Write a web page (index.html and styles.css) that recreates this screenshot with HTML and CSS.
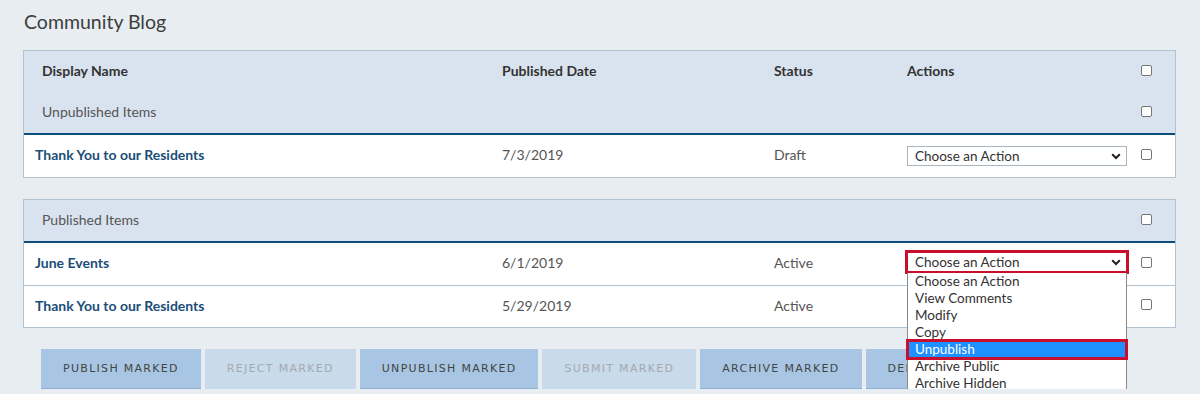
FILE: index.html
```html
<!DOCTYPE html>
<html lang="en">
<head>
<meta charset="utf-8">
<title>Community Blog</title>
<link rel="stylesheet" href="styles.css">
</head>
<body>
<div class="page">
  <h1 class="title">Community Blog</h1>

  <section class="panel">
    <div class="row head-row">
      <div class="cell c-name">Display Name</div>
      <div class="cell">Published Date</div>
      <div class="cell">Status</div>
      <div class="cell">Actions</div>
      <div class="cell c-check"><input type="checkbox" class="cb"></div>
    </div>
    <div class="row group-row">
      <div class="cell c-name group-label">Unpublished Items</div>
      <div class="cell"></div>
      <div class="cell"></div>
      <div class="cell"></div>
      <div class="cell c-check"><input type="checkbox" class="cb"></div>
    </div>
    <div class="row data-row">
      <div class="cell c-name"><a class="item-link" href="#">Thank You to our Residents</a></div>
      <div class="cell">7/3/2019</div>
      <div class="cell">Draft</div>
      <div class="cell">
        <span class="select-wrap">
          <select class="action-select"><option>Choose an Action</option></select>
          <svg class="chev" width="10" height="7" viewBox="0 0 10 7"><path d="M1.2 1.2 L5 5 L8.8 1.2" fill="none" stroke="#222" stroke-width="2"/></svg>
        </span>
      </div>
      <div class="cell c-check"><input type="checkbox" class="cb"></div>
    </div>
  </section>

  <section class="panel">
    <div class="row group-row">
      <div class="cell c-name group-label">Published Items</div>
      <div class="cell"></div>
      <div class="cell"></div>
      <div class="cell"></div>
      <div class="cell c-check"><input type="checkbox" class="cb"></div>
    </div>
    <div class="row data-row">
      <div class="cell c-name"><a class="item-link" href="#">June Events</a></div>
      <div class="cell">6/1/2019</div>
      <div class="cell">Active</div>
      <div class="cell">
        <span class="select-wrap open">
          <select class="action-select highlighted"><option>Choose an Action</option></select>
          <svg class="chev" width="10" height="7" viewBox="0 0 10 7"><path d="M1.2 1.2 L5 5 L8.8 1.2" fill="none" stroke="#222" stroke-width="2"/></svg>
          <ul class="dropdown">
            <li>Choose an Action</li>
            <li>View Comments</li>
            <li>Modify</li>
            <li>Copy</li>
            <li class="selected">Unpublish</li>
            <li>Archive Public</li>
            <li>Archive Hidden</li>
          </ul>
        </span>
      </div>
      <div class="cell c-check"><input type="checkbox" class="cb"></div>
    </div>
    <div class="row data-row">
      <div class="cell c-name"><a class="item-link" href="#">Thank You to our Residents</a></div>
      <div class="cell">5/29/2019</div>
      <div class="cell">Active</div>
      <div class="cell">
        <span class="select-wrap">
          <select class="action-select"><option>Choose an Action</option></select>
          <svg class="chev" width="10" height="7" viewBox="0 0 10 7"><path d="M1.2 1.2 L5 5 L8.8 1.2" fill="none" stroke="#222" stroke-width="2"/></svg>
        </span>
      </div>
      <div class="cell c-check"><input type="checkbox" class="cb"></div>
    </div>
  </section>

  <div class="buttons">
    <button class="btn">Publish Marked</button>
    <button class="btn" disabled>Reject Marked</button>
    <button class="btn">Unpublish Marked</button>
    <button class="btn" disabled>Submit Marked</button>
    <button class="btn">Archive Marked</button>
    <button class="btn btn-under">Delete Marked</button>
  </div>
</div>
</body>
</html>
```

FILE: styles.css
```css
* { box-sizing: border-box; }

html, body {
  margin: 0;
  padding: 0;
  background: #e8edf2;
  font-family: Lato, "Open Sans", "Liberation Sans", sans-serif;
  color: #555;
  overflow: hidden;
}

.page {
  padding: 10px 24px 0 23px;
}

.title {
  margin: 0 0 16px 1px;
  font-size: 19.5px;
  line-height: 24px;
  font-weight: 400;
  color: #3d3d3d;
}

.panel {
  border: 1px solid #b1c2d3;
  background: #fff;
  margin-bottom: 21px;
}

.row {
  display: grid;
  grid-template-columns: 478px 272px 133px 234px 1fr;
  align-items: center;
  font-size: 14px;
}

.head-row,
.group-row {
  background: #d9e3ef;
  height: 41px;
  padding-bottom: 2px;
}

.head-row {
  font-weight: 700;
  color: #333;
}

.group-label {
  color: #555;
  font-size: 14px;
}

.group-row {
  height: 43px;
  border-bottom: 2px solid #0e4c7d;
}

.data-row {
  height: 42px;
  color: #555;
}

.data-row .c-name,
.data-row .cell:nth-child(2),
.data-row .cell:nth-child(3) {
  padding-bottom: 3px;
}

.data-row + .data-row {
  border-top: 1px solid #b1c2d3;
}

.cell {
  display: flex;
  align-items: center;
  min-width: 0;
}

.c-name {
  padding-left: 18px;
}

.data-row .c-name {
  padding-left: 11px;
}

.item-link {
  color: #1b4e78;
  font-weight: 700;
  text-decoration: none;
}

.cb {
  appearance: none;
  -webkit-appearance: none;
  margin: 0;
  width: 11px;
  height: 11px;
  border: 1px solid #767676;
  border-radius: 2px;
  background: #fff;
}

.data-row .cb {
  margin-bottom: 4px;
}

.select-wrap {
  position: relative;
  display: block;
  width: 220px;
  height: 20px;
}

.select-wrap.open {
  margin-bottom: 4px;
}

.action-select {
  appearance: none;
  -webkit-appearance: none;
  display: block;
  width: 220px;
  height: 20px;
  margin: 0;
  padding: 0 0 0 7px;
  border: 1px solid #a9b5c1;
  border-radius: 0;
  background: #fff;
  font-family: inherit;
  font-size: 13.5px;
  line-height: 18px;
  color: #333;
}

.action-select.highlighted {
  outline: 3px solid #c8102e;
  outline-offset: -1px;
}

.chev {
  position: absolute;
  right: 6px;
  top: 7px;
  pointer-events: none;
}

.dropdown {
  position: absolute;
  left: 0;
  top: 21px;
  width: 220px;
  margin: 0;
  padding: 0;
  list-style: none;
  background: #fff;
  border: 1px solid #8a8a8a;
  border-top: none;
  z-index: 10;
}

.dropdown li {
  height: 17px;
  line-height: 17px;
  padding-left: 7px;
  font-size: 13.5px;
  color: #333;
}

.dropdown li.selected {
  background: #1e90ff;
  color: #fff;
  outline: 3px solid #c8102e;
  outline-offset: -1px;
}

.buttons {
  display: flex;
  gap: 4px;
  padding-left: 18px;
}

.btn {
  height: 40px;
  padding: 0 22px;
  border: none;
  border-bottom: 1px solid #8fb0d1;
  background: #a8c6e3;
  font-family: "DejaVu Sans", Verdana, sans-serif;
  font-size: 11px;
  letter-spacing: 1.3px;
  text-transform: uppercase;
  color: #444;
  white-space: nowrap;
}

.btn:disabled {
  background: #c9daeb;
  border-bottom-color: #c9daeb;
  color: #a3a9b0;
}
```
